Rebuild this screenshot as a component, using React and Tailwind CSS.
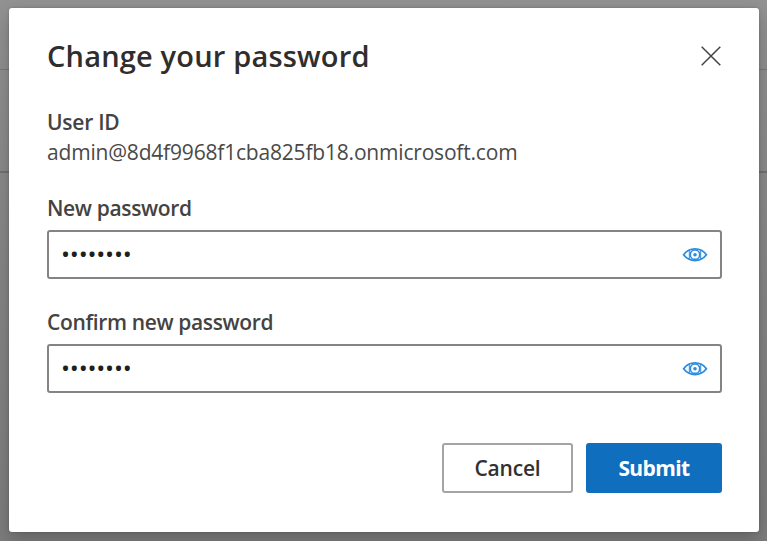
import React, { useState } from "react";

const EyeIcon = () => (
  <svg width="26" height="16" viewBox="0 0 26 16" fill="none" stroke="#2b8ce0">
    <path
      d="M1.6 7.7C4.6 3.7 8.4 1.9 13 1.9S21.4 3.7 24.4 7.7C21.4 11.7 17.6 13.5 13 13.5S4.6 11.7 1.6 7.7Z"
      strokeWidth="1.8"
    />
    <path d="M7.3 3.3V12.1M18.7 3.3V12.1" strokeWidth="1" />
    <circle cx="13" cy="7.7" r="4.7" strokeWidth="1.6" />
    <circle cx="13" cy="7.7" r="1.8" fill="#2b8ce0" stroke="none" />
  </svg>
);

const CloseIcon = () => (
  <svg width="20" height="20" viewBox="0 0 20 20" fill="none" stroke="#444444">
    <path d="M0.7 0.7L19.3 19.3M19.3 0.7L0.7 19.3" strokeWidth="1.5" />
  </svg>
);

const PasswordField = ({ id, label }) => {
  const [value, setValue] = useState("password");
  const [visible, setVisible] = useState(false);

  return (
    <div>
      <label
        htmlFor={id}
        className="block h-[30px] text-[21px] leading-[30px] font-semibold tracking-[-0.35px] whitespace-nowrap text-[#444342]"
      >
        {label}
      </label>
      <div className="mt-[7px] flex h-[49px] items-center rounded-[3px] border-2 border-[#858483] pr-[12px] pl-[12px]">
        <input
          id={id}
          type={visible ? "text" : "password"}
          value={value}
          onChange={(e) => setValue(e.target.value)}
          className="min-w-0 flex-1 bg-transparent pb-[1px] text-[24px] tracking-[-0.2px] text-[#201f1e] outline-none"
        />
        <button
          type="button"
          aria-label="Show password"
          onClick={() => setVisible(!visible)}
        >
          <EyeIcon />
        </button>
      </div>
    </div>
  );
};

const App = () => {
  return (
    <div className="h-[541px] w-[767px] overflow-hidden bg-linear-to-b from-[#919191] via-[#858585] to-[#7c7c7c] font-['Open_Sans','Noto_Sans',sans-serif]">
      {/* Dimmed page behind the dialog */}
      <div className="flex h-full flex-col bg-[linear-gradient(#787878,#787878),linear-gradient(#707070,#707070)] bg-[length:100%_1px,100%_2px] bg-[position:0_69px,0_171px] bg-no-repeat pt-[8px] pr-[8px] pl-[9px]">
        <div
          role="dialog"
          className="h-[524px] rounded-[3px] bg-white pt-[28px] pr-[37px] pl-[38px] shadow-[0_8px_18px_rgba(0,0,0,0.2),0_0_3px_rgba(0,0,0,0.2)]"
        >
          {/* Header */}
          <div className="flex h-[40px] items-center justify-between pr-px">
            <h1 className="text-[29px] leading-[40px] font-semibold tracking-[0.18px] whitespace-nowrap text-[#2f2e2d]">
              Change your password
            </h1>
            <button type="button" aria-label="Close">
              <CloseIcon />
            </button>
          </div>

          {/* User */}
          <div className="mt-[31px]">
            <p className="h-[30px] text-[21px] leading-[30px] font-semibold tracking-[-0.25px] text-[#444342]">
              User ID
            </p>
            <p className="h-[30px] text-[21px] leading-[30px] tracking-[-0.19px] whitespace-nowrap text-[#4a4948]">
              admin@8d4f9968f1cba825fb18.onmicrosoft.com
            </p>
          </div>

          <div className="mt-[26px] flex flex-col gap-[28px]">
            <PasswordField id="new" label="New password" />
            <PasswordField id="confirm" label="Confirm new password" />
          </div>

          {/* Actions */}
          <div className="mt-[50px] flex justify-end gap-[13px]">
            <button
              type="button"
              className="h-[50px] w-[131px] rounded-[3px] border-2 border-[#a5a4a3] pt-[2px] text-[21px] font-semibold tracking-[-0.2px] text-[#323130]"
            >
              Cancel
            </button>
            <button
              type="button"
              className="h-[50px] w-[136px] rounded-[3px] bg-[#106ebe] pt-[2px] text-[21px] font-bold tracking-[-0.6px] text-white"
            >
              Submit
            </button>
          </div>
        </div>
      </div>
    </div>
  );
};

export default App;
